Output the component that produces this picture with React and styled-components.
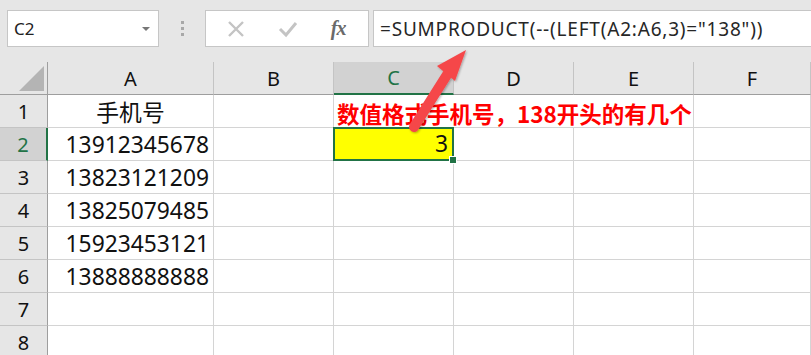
import React from 'react';
import styled, { createGlobalStyle } from 'styled-components';

const GlobalStyle = createGlobalStyle`
  html, body {
    margin: 0;
    padding: 0;
    background: #ffffff;
    overflow: hidden;
  }
  body {
    font-family: "Noto Sans", "Noto Sans CJK SC", sans-serif;
  }
`;

const Window = styled.div`
  width: 811px;
  height: 355px;
  position: relative;
  overflow: hidden;
  background: #ffffff;
`;

const Toolbar = styled.div`
  height: 62px;
  background: #e6e6e6;
  display: flex;
  align-items: flex-start;
  padding: 10px 0 0 7px;
  box-sizing: border-box;
`;

const NameBox = styled.div`
  width: 152px;
  height: 37px;
  box-sizing: border-box;
  background: #ffffff;
  border: 1px solid #c6c6c6;
  display: flex;
  align-items: center;
  justify-content: space-between;
  padding: 0 8px 0 6px;
  font-size: 17px;
  color: #222;
`;

const Caret = styled.span`
  width: 0;
  height: 0;
  border-left: 4px solid transparent;
  border-right: 4px solid transparent;
  border-top: 4px solid #777;
`;

const Grip = styled.div`
  width: 46px;
  height: 37px;
  display: flex;
  flex-direction: column;
  align-items: center;
  justify-content: center;
  gap: 3px;
  span {
    width: 3px;
    height: 3px;
    background: #a8a8a8;
  }
`;

const FxButtons = styled.div`
  width: 164px;
  height: 37px;
  box-sizing: border-box;
  background: #ffffff;
  border: 1px solid #c6c6c6;
  display: flex;
  align-items: center;
  justify-content: space-around;
  padding: 0 6px 0 4px;
`;

const FxLabel = styled.span`
  font-family: "Liberation Serif", serif;
  font-style: italic;
  font-weight: bold;
  font-size: 20px;
  color: #6a6a6a;
  letter-spacing: -1px;
`;

const FormulaBox = styled.div`
  flex: 1;
  margin-left: 4px;
  height: 37px;
  box-sizing: border-box;
  background: #ffffff;
  border: 1px solid #c6c6c6;
  border-right: none;
  display: flex;
  align-items: center;
  padding-left: 6px;
  font-size: 19px;
  letter-spacing: 0.8px;
  color: #262626;
  white-space: nowrap;
`;

const Sheet = styled.div`
  display: grid;
  grid-template-columns: 48px 166px 120px 120px 120px 120px 1fr;
  grid-auto-rows: 33px;
  position: relative;
`;

const HeadCell = styled.div`
  box-sizing: border-box;
  background: ${({ active }) => (active ? '#d2d2d2' : '#e6e6e6')};
  color: ${({ active }) => (active ? '#217346' : '#111')};
  border-right: 1px solid ${({ edge }) => (edge ? '#9e9e9e' : '#c4c4c4')};
  border-bottom: ${({ active }) => (active ? '2px solid #217346' : '1px solid #9e9e9e')};
  display: flex;
  align-items: center;
  justify-content: center;
  font-size: 20px;
  position: relative;
`;

const RowHead = styled.div`
  box-sizing: border-box;
  background: ${({ active }) => (active ? '#d2d2d2' : '#e6e6e6')};
  color: ${({ active }) => (active ? '#217346' : '#111')};
  border-right: ${({ active }) => (active ? '2px solid #217346' : '1px solid #9e9e9e')};
  border-bottom: 1px solid #c4c4c4;
  display: flex;
  align-items: center;
  justify-content: center;
  font-size: 20px;
`;

const Corner = styled.div`
  box-sizing: border-box;
  background: #e6e6e6;
  border-right: 1px solid #9e9e9e;
  border-bottom: 1px solid #9e9e9e;
  position: relative;
  &::after {
    content: '';
    position: absolute;
    right: 3px;
    bottom: 3px;
    width: 0;
    height: 0;
    border-left: 25px solid transparent;
    border-bottom: 25px solid #b4b4b4;
  }
`;

const Cell = styled.div`
  box-sizing: border-box;
  border-right: ${({ open }) => (open ? 'none' : '1px solid #d4d4d4')};
  border-bottom: 1px solid #d4d4d4;
  display: flex;
  align-items: center;
  justify-content: ${({ align }) => align || 'flex-end'};
  padding: 0 4px 0 4px;
  font-size: 22.8px;
  color: #111;
  white-space: nowrap;
  position: relative;
`;

const Note = styled.span`
  position: absolute;
  left: 3px;
  top: 2px;
  font-family: "Noto Sans CJK SC", sans-serif;
  font-weight: bold;
  font-size: 22.5px;
  color: #ff0000;
  white-space: nowrap;
  z-index: 2;
`;

const ActiveCell = styled.div`
  box-sizing: border-box;
  background: #ffff00;
  outline: 2px solid #217346;
  outline-offset: -2px;
  margin: -1px 0 0 -1px;
  border-right: 1px solid #d4d4d4;
  border-bottom: 1px solid #d4d4d4;
  display: flex;
  align-items: center;
  justify-content: flex-end;
  padding-right: 5px;
  font-size: 22.8px;
  color: #111;
  position: relative;
  z-index: 1;
  &::after {
    content: '';
    position: absolute;
    right: -4px;
    bottom: -4px;
    width: 6px;
    height: 6px;
    background: #217346;
    border: 1px solid #ffffff;
  }
`;

const Arrow = styled.svg`
  position: absolute;
  left: 400px;
  top: -22px;
  z-index: 3;
  overflow: visible;
`;

const columns = ['A', 'B', 'C', 'D', 'E', 'F'];
const phones = ['13912345678', '13823121209', '13825079485', '15923453121', '13888888888'];

export default function App() {
  const rows = [1, 2, 3, 4, 5, 6, 7, 8];

  const renderRow = (r) => {
    const cells = [];
    cells.push(
      <RowHead key={`h${r}`} active={r === 2}>
        {r}
      </RowHead>
    );
    columns.forEach((c) => {
      const key = `${c}${r}`;
      if (c === 'A') {
        if (r === 1) {
          cells.push(
            <Cell key={key} align="center">
              手机号
            </Cell>
          );
        } else if (r <= 6) {
          cells.push(<Cell key={key}>{phones[r - 2]}</Cell>);
        } else {
          cells.push(<Cell key={key} />);
        }
      } else if (c === 'C' && r === 1) {
        cells.push(
          <Cell key={key} open>
            <Note>数值格式手机号，138开头的有几个</Note>
          </Cell>
        );
      } else if (c === 'D' && r === 1) {
        cells.push(<Cell key={key} open />);
      } else if (c === 'C' && r === 2) {
        cells.push(<ActiveCell key={key}>3</ActiveCell>);
      } else {
        cells.push(<Cell key={key} />);
      }
    });
    return cells;
  };

  return (
    <Window>
      <GlobalStyle />
      <Toolbar>
        <NameBox>
          C2
          <Caret />
        </NameBox>
        <Grip>
          <span />
          <span />
          <span />
        </Grip>
        <FxButtons>
          <svg width="18" height="18" viewBox="0 0 18 18">
            <path d="M2 2 L16 16 M16 2 L2 16" stroke="#c4c4c4" strokeWidth="2.4" fill="none" />
          </svg>
          <svg width="20" height="18" viewBox="0 0 20 18">
            <path d="M2 9 L8 15 L18 3" stroke="#c4c4c4" strokeWidth="3" fill="none" />
          </svg>
          <FxLabel>fx</FxLabel>
        </FxButtons>
        <FormulaBox>=SUMPRODUCT(--(LEFT(A2:A6,3)="138"))</FormulaBox>
      </Toolbar>
      <Sheet>
        <Corner />
        {columns.map((c) => (
          <HeadCell key={c} active={c === 'C'}>
            {c}
          </HeadCell>
        ))}
        {rows.map(renderRow)}
        <Arrow width="80" height="100" viewBox="0 0 80 100">
          <defs>
            <filter id="sh" x="-20%" y="-20%" width="140%" height="140%">
              <feDropShadow dx="1" dy="1" stdDeviation="1.2" floodColor="#000" floodOpacity="0.3" />
            </filter>
          </defs>
          <g filter="url(#sh)">
            <line x1="14" y1="87" x2="50" y2="30" stroke="#f5474a" strokeWidth="10" strokeLinecap="round" />
            <polygon points="66,10 37,26 55,41" fill="#f5474a" />
          </g>
        </Arrow>
      </Sheet>
    </Window>
  );
}
